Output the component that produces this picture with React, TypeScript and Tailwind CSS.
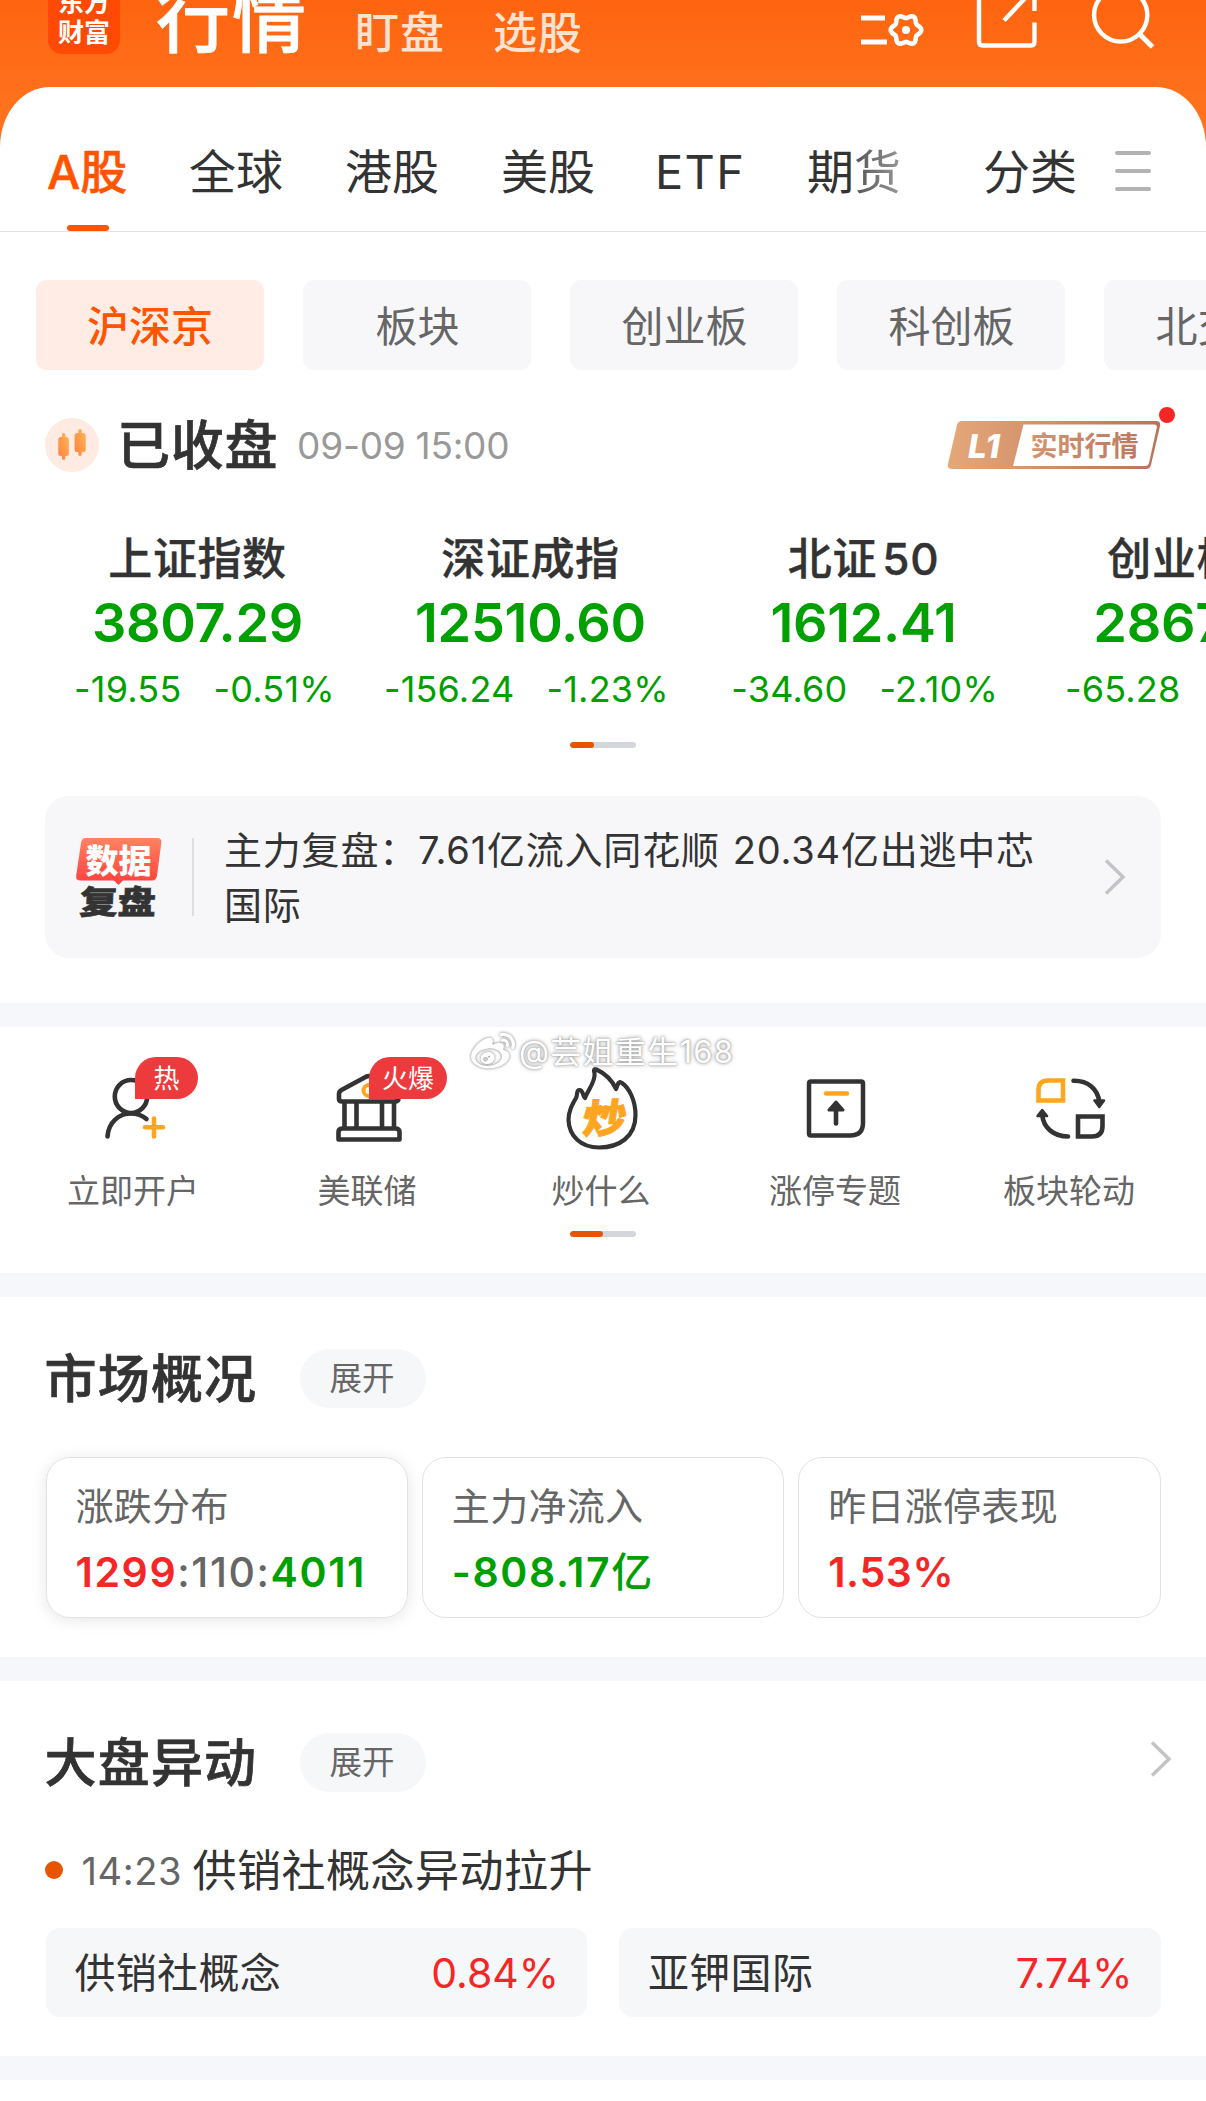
import React from "react";
import { FaWeibo } from "react-icons/fa";

const INK = "#333333";
const AMBER = "#ffa51f";

function gearPath(cx: number, cy: number) {
  const pts: string[] = [];
  for (let i = 0; i < 72; i++) {
    const a = (i / 72) * Math.PI * 2;
    const r = 13.6 + 1.7 * Math.cos(6 * a);
    pts.push(`${(cx + r * Math.cos(a)).toFixed(2)} ${(cy + r * Math.sin(a)).toFixed(2)}`);
  }
  return `M${pts.join("L")}Z`;
}

function Header() {
  return (
    <header className="flex h-[87px] items-end overflow-visible pb-[33px] pl-12">
      <div className="flex h-[72px] w-[72px] shrink-0 flex-col items-center justify-end rounded-[14px] bg-[#ff4a05] pb-[6px] text-[26px] leading-[30px] font-bold text-white">
        <span>东方</span>
        <span>财富</span>
      </div>
      <h1 className="-mb-[2px] ml-[36px] w-[199px] text-[74px] leading-[74px] font-medium tracking-[2px] whitespace-nowrap text-white [-webkit-text-stroke:0.8px]">行情</h1>
      <span className="-mb-[1px] w-[138px] text-[44px] leading-[44px] font-medium tracking-[1px] text-[#ffe2d0]">盯盘</span>
      <span className="-mb-[1px] text-[44px] leading-[44px] font-medium tracking-[1px] text-[#ffe2d0]">选股</span>
      <svg className="-mb-[33px] ml-auto h-[87px] w-[360px] shrink-0" viewBox="846 0 360 87" fill="none" stroke="#fff" strokeWidth="4.4">
        <path d="M861 18h24M861 42h26" strokeWidth="5" />
        <path d={gearPath(906, 30)} strokeWidth="4.6" strokeLinejoin="round" />
        <circle cx="906" cy="30" r="4" fill="#fff" stroke="none" />
        <path d="M979 -10V42q0 3.500 3.500 3.500H1031q3.500 0 3.500-3.500V22.500M1034.500 11V-8M1004 20.500L1030 -7" />
        <circle cx="1120.700" cy="15" r="26.600" />
        <path d="M1139 33.500L1152.500 47" strokeWidth="5" />
      </svg>
    </header>
  );
}

function MarketTabs() {
  return (
    <nav className="flex h-[145px] items-center border-b border-[#e2e2e2] pt-[26px] pl-[48px] text-[47px] leading-[60px] whitespace-nowrap text-[#333]">
      <div className="relative -ml-[1px] w-[142px] font-medium text-[#ff5500] [-webkit-text-stroke:0.5px]">
        A股
        <i className="absolute top-[83px] left-[20px] h-[6px] w-[42px] rounded-[3px] bg-[#ff5500]" />
      </div>
      <div className="w-[156px]">全球</div>
      <div className="w-[156px]">港股</div>
      <div className="w-[154px]">美股</div>
      <div className="w-[152px] tracking-[1.300px]">ETF</div>
      <div className="w-[176px]">
        期<span className="bg-linear-to-r from-[#555] to-[#999] bg-clip-text text-transparent">货</span>
      </div>
      <div className="w-[132px]">分类</div>
      <div className="-mt-[2px] flex w-9 flex-col gap-[14px]">
        <i className="h-[4px] rounded-full bg-[#b3b3b3]" />
        <i className="h-[4px] rounded-full bg-[#b3b3b3]" />
        <i className="h-[4px] rounded-full bg-[#b3b3b3]" />
      </div>
    </nav>
  );
}

function BoardChips() {
  return (
    <div className="mt-12 flex h-[90px] gap-[39px] overflow-hidden pl-9 text-[42px] leading-[93px] text-[#666]">
      <div className="w-[228px] shrink-0 rounded-[11px] bg-[#ffede5] text-center font-medium text-[#ff5500]">沪深京</div>
      {["板块", "创业板", "科创板", "北交所"].map((t) => (
        <div key={t} className="w-[228px] shrink-0 rounded-[11px] bg-[#f7f7fa] pl-[1px] text-center">
          {t}
        </div>
      ))}
    </div>
  );
}

function StatusRow() {
  return (
    <div className="mt-[48px] flex h-[54px] items-center pl-[45px]">
      <svg className="h-[54px] w-[54px]" viewBox="0 0 54 54">
        <defs>
          <linearGradient id="candle" x1="0" y1="1" x2="1" y2="0">
            <stop offset="0" stopColor="#ff7f3c" />
            <stop offset="1" stopColor="#ffb85a" />
          </linearGradient>
        </defs>
        <circle cx="27" cy="27" r="27" fill="#ffebe1" />
        <g fill="url(#candle)">
          <path d="M17 17q0-2 1.700-2t1.700 2v2h1q2.500 0 2.500 2.500v14q0 2.500-2.500 2.500h-1v2q0 2-1.700 2T17 40v-2h-1.200q-2.500 0-2.500-2.500v-14q0-2.500 2.500-2.500H17z" />
          <path d="M33.300 13q0-2 1.700-2t1.700 2v2h1.500q2.500 0 2.500 2.500v14q0 2.500-2.500 2.500h-1.500v2q0 2-1.700 2t-1.700-2v-2h-1.200q-2.500 0-2.500-2.500v-14q0-2.500 2.500-2.500h1.200z" />
        </g>
      </svg>
      <span className="mt-[2px] ml-[18px] text-[53px] leading-[54px] font-medium tracking-[0.700px] text-[#333] [-webkit-text-stroke:0.7px]">已收盘</span>
      <span className="mt-[2px] ml-[19px] text-[37px] leading-[54px] tracking-[-0.250px] text-[#999]">09-09 15:00</span>
      <div className="relative mr-[45px] ml-auto h-[54px] w-[214px]">
        <svg className="h-[54px] w-[214px]" viewBox="947 418 214 54">
          <defs>
            <linearGradient id="bronze" gradientUnits="userSpaceOnUse" x1="948" y1="0" x2="1161" y2="0">
              <stop offset="0" stopColor="#e5a878" />
              <stop offset="0.45" stopColor="#d2906c" />
              <stop offset="1" stopColor="#b8735c" />
            </linearGradient>
          </defs>
          <path d="M962 421H1156q5 0 4 5L1151 465q-1 4-5 4H952q-5 0-4-5L957 425q1-4 5-4z" fill="url(#bronze)" />
          <path d="M1023.500 424.500H1154q3.500 0 2.700 3.500L1149 463q-.7 3-3.500 3H1013z" fill="#fff" />
          <text x="968" y="458" fontSize="33" fontWeight="800" fontStyle="italic" fill="#fff" fontFamily="Inter">L1</text>
          <text x="1030.500" y="455.500" fontSize="27" fontWeight="700" fill="url(#bronze)" fontFamily="Noto Sans CJK SC">实时行情</text>
        </svg>
        <i className="absolute top-[-11px] left-[212px] h-4 w-4 rounded-full bg-[#f52626]" />
      </div>
    </div>
  );
}

const indices = [
  ["上证指数", "3807.29", "-19.55", "-0.51%"],
  ["深证成指", "12510.60", "-156.24", "-1.23%"],
  ["北证 50", "1612.41", "-34.60", "-2.10%"],
  ["创业板指", "2867.97", "-65.28", "-2.23%"],
];

function Indices() {
  return (
    <div className="mt-[56px] flex overflow-hidden pl-[31px] text-[#00a000]">
      {indices.map(([name, value, diff, pct]) => (
        <div key={name} className="w-[333px] shrink-0">
          <div className="h-[62px] text-center text-[44px] leading-[62px] font-medium tracking-[0.600px] [word-spacing:-7px] text-[#333] [-webkit-text-stroke:0.4px]">{name}</div>
          <div className="h-[66px] text-center text-[54px] leading-[66px] font-semibold tracking-[-0.300px]">{value}</div>
          <div className="mt-[5px] grid grid-cols-2 gap-[34px] text-[36px] leading-[56px] tracking-[0.200px]">
            <span className="-mr-[1px] flex justify-end">{diff}</span>
            <span className="-ml-[1px]">{pct}</span>
          </div>
        </div>
      ))}
    </div>
  );
}

function ReviewCard() {
  return (
    <div className="mx-[45px] mt-12 flex h-[162px] items-center rounded-[24px] bg-[#f7f7fa]">
      <svg className="mt-[2px] ml-[29px] h-[84px] w-[90px]" viewBox="74 836 90 84">
        <defs>
          <linearGradient id="coral" x1="0" y1="0" x2="0" y2="1">
            <stop offset="0" stopColor="#ff8262" />
            <stop offset="1" stopColor="#ff403c" />
          </linearGradient>
        </defs>
        <path d="M86 838H157q5 0 4.300 5L157 875.500q-.7 5-5 5H123L118.500 885L114 880.500H80.500q-5 0-4.300-5L81 843q.7-5 5-5z" fill="url(#coral)" />
        <text x="85.500" y="872.500" fontSize="33" fontWeight="900" fill="#fff" fontFamily="Noto Sans CJK SC">数据</text>
        <text transform="translate(79 913.500) skewX(-2) scale(1.16 1)" fontSize="33" fontWeight="900" fill={INK} stroke={INK} strokeWidth="0.600" fontFamily="Noto Sans CJK SC">复盘</text>
      </svg>
      <i className="ml-[28px] h-[78px] w-[2px] bg-[#dedee0]" />
      <p className="mt-[2px] ml-[30px] w-[834px] text-[38px] leading-[55px] tracking-[0.800px] [word-spacing:1.500px] text-[#333]">
        主力复盘：7.61亿流入同花顺 20.34亿出逃中芯国际
      </p>
      <svg className="mr-[34px] ml-auto h-[38px] w-6" viewBox="0 0 24 38" fill="none" stroke="#c4c4c8" strokeWidth="3.500">
        <path d="M3 2.500L20 19L3 35.500" />
      </svg>
    </div>
  );
}

function Pager({ half = false }: { half?: boolean }) {
  return (
    <div className="mx-auto flex h-[6px] w-[66px] overflow-hidden rounded-[3px] bg-[#d3d7dc]">
      <i className={half ? "w-[33px] rounded-[3px] bg-[#e85500]" : "w-6 rounded-[3px] bg-[#e85500]"} />
    </div>
  );
}

const shortcuts: { label: string; box: string; badge?: string; icon: React.ReactNode }[] = [
  {
    label: "立即开户",
    box: "83 1055 100 100",
    badge: "热",
    icon: (
      <>
        <ellipse cx="131" cy="1096.500" rx="16.200" ry="16.500" />
        <path d="M107.500 1136.500C108.500 1122 119 1113.500 131 1113.500Q140 1113.500 146.500 1119" />
        <path d="M154 1118.500v18M145 1127.300h18" stroke={AMBER} />
      </>
    ),
  },
  {
    label: "美联储",
    box: "317 1055 100 100",
    badge: "火爆",
    icon: (
      <>
        <circle cx="369" cy="1090.500" r="5.500" stroke={AMBER} strokeWidth="4" />
        <path d="M366.500 1076.500L341.500 1090Q339 1091.500 339 1094V1099Q339 1101.500 342 1101.500H395Q398.500 1101.500 398.500 1098V1094Q398.500 1091.500 396 1090L371 1076.500Q369 1075.500 366.500 1076.500z" />
        <path d="M344.500 1102V1128M356.500 1102V1128M382 1102V1128M394 1102V1128" strokeLinecap="butt" />
        <path d="M338.500 1139.500V1132Q338.500 1128.500 343 1128.500H395Q399.500 1128.500 399.500 1132V1139.500z" />
      </>
    ),
  },
  {
    label: "炒什么",
    box: "552 1055 100 100",
    icon: (
      <>
        <path d="M586 1098C583.500 1095 584 1090 580.500 1090C577 1090 579 1094 577 1098C573 1105 569.500 1111 569.500 1120C570 1136 582 1147.500 600 1147.500C620 1147.500 636.500 1137 636.500 1115C636.500 1100 630 1088 623 1083C620 1080.500 619 1083 617 1089C613 1080 605 1073 597.500 1069.500C595 1068.500 594.500 1070 595.500 1073C597 1081 589 1090 586 1098z" strokeWidth="4.200" />
        <text transform="translate(582 1132.500) skewX(-8) scale(1.08 1)" fontSize="40" fontWeight="900" fill={AMBER} stroke={AMBER} strokeWidth="1" strokeLinejoin="miter" fontFamily="Noto Sans CJK SC">炒</text>
      </>
    ),
  },
  {
    label: "涨停专题",
    box: "786 1055 100 100",
    icon: (
      <>
        <path d="M812 1081.500H862Q864 1081.500 864 1083.500V1123Q864 1135.500 851 1135.500H812Q810 1135.500 810 1133.500V1083.500Q810 1081.500 812 1081.500z" strokeWidth="4.500" />
        <path d="M827 1093.500h21" stroke={AMBER} strokeWidth="4.500" />
        <path d="M837 1106V1123.500" />
        <path d="M837 1102L830 1110H844z" fill={INK} strokeWidth="3" />
      </>
    ),
  },
  {
    label: "板块轮动",
    box: "1021 1055 100 100",
    icon: (
      <>
        <path d="M1065 1080.500V1100.500H1040.500V1090Q1040.500 1080.500 1050 1080.500z" stroke={AMBER} strokeLinejoin="miter" />
        <path d="M1080 1116.500H1104.500V1126Q1104.500 1136.500 1094 1136.500H1080z" strokeLinejoin="miter" />
        <path d="M1075.500 1080.800C1090 1080.500 1100 1089 1101.300 1102" />
        <path d="M1101.300 1107L1096.500 1100.500H1106z" fill={INK} strokeWidth="2.500" />
        <path d="M1070 1136.500C1056 1136.500 1045.500 1128 1044.200 1115" />
        <path d="M1044.200 1110L1039.500 1116H1049z" fill={INK} strokeWidth="2.500" />
      </>
    ),
  },
];

function Shortcuts() {
  return (
    <section className="relative h-[246px] px-4 pt-7">
      <div className="flex">
        {shortcuts.map((s) => (
          <div key={s.label} className="relative flex w-[234px] flex-col items-center">
            <svg className="h-[100px] w-[100px]" viewBox={s.box} fill="none" stroke={INK} strokeWidth="4.600" strokeLinecap="round" strokeLinejoin="round">
              {s.icon}
            </svg>
            {s.badge && (
              <b className="absolute top-[2px] left-[119px] h-[42px] min-w-[63px] rounded-[21px] rounded-bl-none bg-[#ed3b3d] px-[13px] text-center text-[26px] leading-[44px] font-normal whitespace-nowrap text-white">
                {s.badge}
              </b>
            )}
            <span className="mt-[16px] text-[33px] leading-[40px] text-[#666]">{s.label}</span>
          </div>
        ))}
      </div>
      <div className="mt-[20px]">
        <Pager half />
      </div>
      <div className="absolute top-[3px] left-[471px] flex items-center text-[31px] leading-10 tracking-[1.300px] whitespace-nowrap text-white [text-shadow:0_0_2px_#999,0_0_4px_#999]">
        <FaWeibo className="h-[44px] w-[44px] drop-shadow-[0_0_1.500px_#777]" />
        <span className="ml-[4px]">@芸姐重生168</span>
      </div>
    </section>
  );
}

function Band() {
  return <div className="h-6 bg-[#f6f7fa]" />;
}

function SectionTitle({ title }: { title: string }) {
  return (
    <>
      <h2 className="-ml-[1px] w-[255px] text-[52px] leading-[62px] font-medium tracking-[1.200px] text-[#333] [-webkit-text-stroke:0.7px]">{title}</h2>
      <button className="h-[59px] w-[126px] rounded-full bg-[#f6f7f9] pr-[1px] text-[32.500px] leading-[59px] text-[#666]">展开</button>
    </>
  );
}

function Overview() {
  return (
    <section className="h-[360px] px-[45.500px] pt-[52px]">
      <div className="flex h-[59px]">
        <SectionTitle title="市场概况" />
      </div>
      <div className="mt-[49px] grid h-[161px] grid-cols-3 gap-[14px] text-[41px] leading-[50px] font-semibold text-[#00a000]">
        <div className="rounded-[24px] border border-[#e2e2e2] pt-[23px] pl-[29px] shadow-[0_2px_16px_rgba(0,0,0,0.1)]">
          <div className="text-[38px] font-normal tracking-[0.300px] text-[#666]">涨跌分布</div>
          <div className="mt-[16px] tracking-[1.600px]">
            <span className="text-[#f52626]">1299</span>
            <span className="font-medium text-[#666]">:110:</span>4011
          </div>
        </div>
        <div className="rounded-[24px] border border-[#e2e2e2] pt-[23px] pl-[29px]">
          <div className="text-[38px] font-normal tracking-[0.300px] text-[#666]">主力净流入</div>
          <div className="mt-[16px] tracking-[1.600px]">
            -808.17<span className="font-medium">亿</span>
          </div>
        </div>
        <div className="rounded-[24px] border border-[#e2e2e2] pt-[23px] pl-[29px]">
          <div className="text-[38px] font-normal tracking-[0.300px] text-[#666]">昨日涨停表现</div>
          <div className="mt-[16px] tracking-[0.600px] text-[#f52626]">1.53%</div>
        </div>
      </div>
    </section>
  );
}

function Movers() {
  return (
    <section className="h-[375px] px-[45.500px] pt-[52px]">
      <div className="flex h-[59px]">
        <SectionTitle title="大盘异动" />
        <svg className="mt-[7px] -mr-[12px] ml-auto h-[38px] w-6" viewBox="0 0 24 38" fill="none" stroke="#c4c4c4" strokeWidth="3.500">
          <path d="M3 2.500L20 19L3 35.500" />
        </svg>
      </div>
      <div className="mt-[49px] flex h-[60px] items-center text-[44px] text-[#333]">
        <i className="-mt-[3px] -ml-[1px] h-[18px] w-[18px] rounded-full bg-[#e85500]" />
        <span className="mt-[1px] ml-[19px] w-[111px] text-[38px] tracking-[0.600px] text-[#666]">14:23</span>
        <span className="tracking-[0.500px]">供销社概念异动拉升</span>
      </div>
      <div className="mt-[27px] grid h-[89px] grid-cols-2 gap-8 text-[41px] leading-[90px] text-[#333]">
        <div className="flex h-[89px] justify-between rounded-[14px] bg-[#f6f7f9] pr-[28px] pl-[29px]">
          <span className="tracking-[0.300px]">供销社概念</span>
          <span className="text-[#f52626]">0.84%</span>
        </div>
        <div className="flex h-[89px] justify-between rounded-[14px] bg-[#f6f7f9] pr-[28px] pl-[29px]">
          <span className="tracking-[0.300px]">亚钾国际</span>
          <span className="text-[#f52626]">7.74%</span>
        </div>
      </div>
    </section>
  );
}

export default function App() {
  return (
    <div className="h-[2101px] w-[1206px] overflow-hidden bg-linear-to-b from-[#ff640f] to-[#ff711c] to-[100px] font-['Inter','Noto_Sans_CJK_SC',sans-serif]">
      <Header />
      <main className="h-[2014px] overflow-hidden rounded-t-[50px_60px] bg-white">
        <MarketTabs />
        <BoardChips />
        <StatusRow />
        <Indices />
        <div className="mt-[25px]">
          <Pager />
        </div>
        <ReviewCard />
        <div className="h-[45px]" />
        <Band />
        <Shortcuts />
        <Band />
        <Overview />
        <Band />
        <Movers />
        <Band />
      </main>
    </div>
  );
}
